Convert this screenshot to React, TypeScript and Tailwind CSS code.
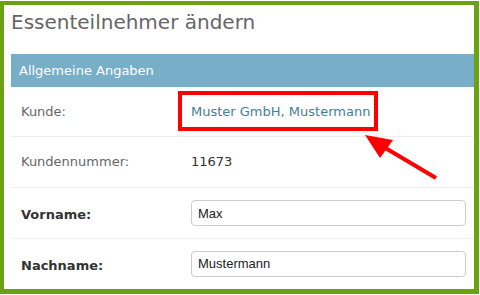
export default function App() {
  const font = { fontFamily: '"DejaVu Sans", Verdana, sans-serif' };
  return (
    <div className="relative h-[295px] w-[480px] overflow-hidden bg-white pt-px" style={font}>
      <div className="h-[293px] w-[479px] border-[5px] border-l-[4px] border-t-[4px] border-[#6aa211] bg-white pl-[7px]">
        <h1 className="pt-[3px] text-[20px] font-normal leading-[28px] text-[#666]">Essenteilnehmer ändern</h1>
        <div className="mt-[18px] bg-[#79aec8] px-2 text-[13px] leading-[33px] text-white">Allgemeine Angaben</div>
        <div className="flex h-[50px] items-center border-b border-[#eee] text-[13px]">
          <div className="w-[180px] pl-[10px] text-[#666]">Kunde:</div>
          <div className="text-[#447e9b]">Muster GmbH, Mustermann</div>
        </div>
        <div className="flex h-[51px] items-center border-b border-[#eee] text-[13px]">
          <div className="w-[180px] pl-[10px] text-[#666]">Kundennummer:</div>
          <div className="text-[#333]">11673</div>
        </div>
        <div className="flex h-[51px] items-center border-b border-[#eee] text-[13px]">
          <div className="w-[180px] pl-[10px] pt-[4px] font-bold text-[#333]">Vorname:</div>
          <input
            readOnly
            value="Max"
            className="h-[26px] w-[275px] rounded-[4px] border border-[#ccc] px-[6px] text-[13px] text-[#222] outline-none"
            style={{ fontFamily: '"Liberation Sans", Arial, sans-serif' }}
          />
        </div>
        <div className="flex h-[49px] items-center text-[13px]">
          <div className="w-[180px] pl-[10px] pt-[4px] font-bold text-[#333]">Nachname:</div>
          <input
            readOnly
            value="Mustermann"
            className="h-[26px] w-[275px] rounded-[4px] border border-[#ccc] px-[6px] text-[13px] text-[#222] outline-none"
            style={{ fontFamily: '"Liberation Sans", Arial, sans-serif' }}
          />
        </div>
      </div>
      <div className="absolute left-[178px] top-[91px] h-[40px] w-[200px] border-4 border-[#ff0000]" />
      <svg className="absolute left-0 top-0" width="480" height="295" viewBox="0 0 480 295">
        <line x1="436" y1="178" x2="382" y2="146" stroke="#ff0000" strokeWidth="4" />
        <polygon points="365,135 393,140 380,158" fill="#ff0000" />
      </svg>
    </div>
  );
}
